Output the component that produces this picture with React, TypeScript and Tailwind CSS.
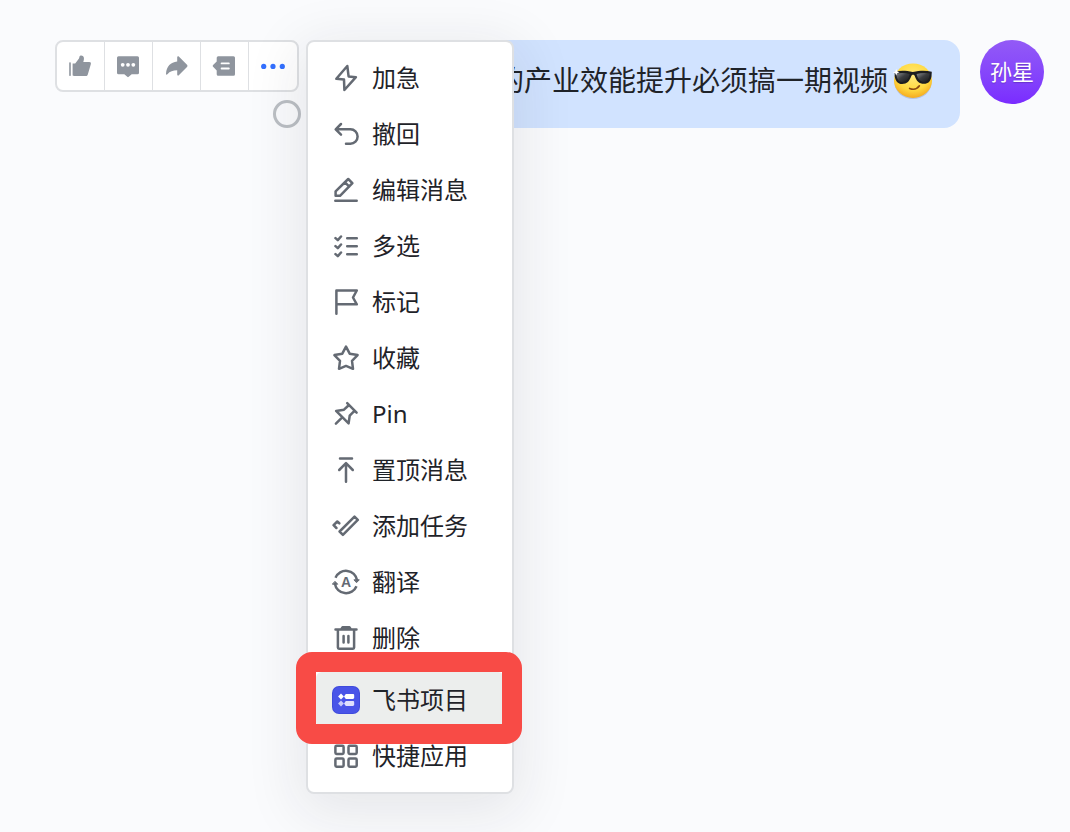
import React from 'react';

interface IconProps {
  children: React.ReactNode;
}

function LineIcon({ children }: IconProps) {
  return (
    <svg
      viewBox="0 0 28 28"
      className="h-7 w-7 shrink-0 text-[#646a73]"
      fill="none"
      stroke="currentColor"
      strokeWidth="2.5"
      strokeLinecap="round"
      strokeLinejoin="round"
      aria-hidden="true"
    >
      {children}
    </svg>
  );
}

function SolidIcon({ children }: IconProps) {
  return (
    <svg viewBox="0 0 28 28" className="h-7 w-7" fill="currentColor" aria-hidden="true">
      {children}
    </svg>
  );
}

function ProjectLogo() {
  return (
    <svg viewBox="0 0 28 28" className="h-7 w-7 shrink-0" aria-hidden="true">
      <rect width="28" height="28" rx="7" fill="#3f4bdc" />
      <rect x="1" y="1" width="26" height="26" rx="6" fill="#4954e8" />
      <path d="M9 7.600l2.900 2.900L9 13.400l-2.900-2.900z" fill="#fff" />
      <path d="M13.800 8h7c.9 0 1.400.5 1.400 1.400v2.200c0 .9-.5 1.400-1.400 1.400h-7L12 10.500z" fill="#fff" />
      <path d="M9 14.600l2.900 2.900L9 20.400l-2.900-2.900z" fill="#c9ccfa" />
      <path d="M13.800 15h7c.9 0 1.400.5 1.400 1.400v2.200c0 .9-.5 1.400-1.400 1.400h-7L12 17.500z" fill="#dfe1fd" />
    </svg>
  );
}

function CoolEmoji() {
  return (
    <svg viewBox="0 0 42 42" className="h-[42px] w-[42px] shrink-0" role="img" aria-label="耍酷">
      <defs>
        <radialGradient id="face" cx="0.5" cy="0.35" r="0.65">
          <stop offset="0" stopColor="#ffea7c" />
          <stop offset="0.65" stopColor="#ffd93f" />
          <stop offset="1" stopColor="#f5ab20" />
        </radialGradient>
        <linearGradient id="lens" x1="0" y1="0" x2="1" y2="1">
          <stop offset="0" stopColor="#8b8d90" />
          <stop offset="0.45" stopColor="#3b3d40" />
          <stop offset="1" stopColor="#17181a" />
        </linearGradient>
      </defs>
      <ellipse cx="21" cy="22.5" rx="18.5" ry="16.5" fill="#9aa4c0" opacity="0.5" />
      <ellipse cx="21" cy="20.7" rx="19" ry="17.2" fill="url(#face)" />
      <path d="M2.6 11.8c6-1.6 11-1.4 18.2.2 7.4-1.6 12.7-1.8 19-.2l-.3 4.4c-.8 5-3.2 7.6-7.5 7.6-5 0-7.6-2.8-9.2-7.8-.7-1.8-2.8-1.8-3.5 0-1.7 5-4.2 8-9.2 8-4.3 0-6.600-2.900-7.400-7.800z" fill="#1d1e20" />
      <path d="M4.3 13.6c4.5-1 9.2-.8 13.4.5-1 4.8-3.6 8-7.7 8-3.6 0-5.3-3.5-5.7-8.5z" fill="url(#lens)" />
      <path d="M24.6 14.1c4.4-1.2 8.9-1.3 13.2-.5-.5 5-2.3 8.300-5.900 8.300-4 0-6.300-3-7.300-7.800z" fill="url(#lens)" />
      <path d="M4.2 9l1 2.300 2.300 1-2.300 1-1 2.300-1-2.300-2.300-1 2.300-1z" fill="#fff" />
      <path d="M17.600 28.400c4 1.600 7.600.6 9.800-2.600" fill="none" stroke="#8a4a12" strokeWidth="1.600" strokeLinecap="round" />
    </svg>
  );
}

const quickActions = [
  {
    label: '表情回复',
    color: 'text-[#8f959e]',
    icon: (
      <SolidIcon>
        <rect x="3.2" y="10.3" width="1.6" height="13.6" rx="0.6" />
        <path d="M6.6 11.4h2.6L13 6.5l.6-2.2c.5-1.4 3.8-1.4 4.3 1.5.2 1.4-.2 2.9-.6 4.200h6c1.400 0 1.900.9 1.500 2.200l-3 10.200c-.4 1-1 1.500-2 1.500H7.800c-.8 0-1.200-.4-1.200-1.200z" />
      </SolidIcon>
    ),
  },
  {
    label: '回复',
    color: 'text-[#8f959e]',
    icon: (
      <SolidIcon>
        <path d="M4.500 4.300h19A1.500 1.500 0 0 1 25 5.800v15a1.500 1.500 0 0 1-1.500 1.500h-5.800l-3 2.500a1 1 0 0 1-1.400 0l-3-2.500H4.500A1.500 1.500 0 0 1 3 20.800v-15a1.500 1.500 0 0 1 1.500-1.500z" />
        <g fill="#fff">
          <circle cx="8.7" cy="12.8" r="1.900" />
          <circle cx="14" cy="12.8" r="1.900" />
          <circle cx="19.3" cy="12.8" r="1.900" />
        </g>
      </SolidIcon>
    ),
  },
  {
    label: '转发',
    color: 'text-[#8f959e]',
    icon: (
      <SolidIcon>
        <path d="M15.200 5.200c0-1 .9-1.400 1.600-.7l8.200 8.300c.6.600.6 1.600 0 2.200l-8.200 8.300c-.7.700-1.600.3-1.600-.7v-4.400c-4.400 0-7.200 1-9.800 4-.7.800-1.500.5-1.400-.5C4.600 14.400 8.600 10.200 15.200 9.500z" />
      </SolidIcon>
    ),
  },
  {
    label: '创建话题',
    color: 'text-[#8f959e]',
    icon: (
      <SolidIcon>
        <path d="M8.200 4.200h15.300A1.500 1.500 0 0 1 25 5.700v16.500a1.500 1.500 0 0 1-1.500 1.500H8.200a1.500 1.500 0 0 1-1.500-1.500v-3.800l-3.600-3.600a1.200 1.200 0 0 1 0-1.800l3.600-3.600V5.700a1.500 1.500 0 0 1 1.500-1.500z" />
        <path d="M11.600 11.400h7.200M11.600 16.500h7.200" stroke="#fff" strokeWidth="1.900" strokeLinecap="round" />
      </SolidIcon>
    ),
  },
  {
    label: '更多',
    color: 'text-[#3370ff]',
    icon: (
      <SolidIcon>
        <circle cx="4.7" cy="14.4" r="2.6" />
        <circle cx="14" cy="14.4" r="2.6" />
        <circle cx="23.3" cy="14.4" r="2.6" />
      </SolidIcon>
    ),
  },
];

const messageActions = [
  {
    label: '加急',
    icon: (
      <LineIcon>
        <path d="M15.300 2 4.300 14.800l7.700.8.400 10.400 11.500-12.800-7.300-.8z" />
      </LineIcon>
    ),
  },
  {
    label: '撤回',
    icon: (
      <LineIcon>
        <path d="M9 4 3.700 9.300 9 14.600M4.200 9.300h14.200a7.200 7.200 0 0 1 0 14.400h-4.400" />
      </LineIcon>
    ),
  },
  {
    label: '编辑消息',
    icon: (
      <LineIcon>
        <path d="M3.600 19.800v-4.500L16.200 3l4.200 4.200L8 19.800zM12.800 6.200l4.400 4.400M3.300 24.700h21.400" />
      </LineIcon>
    ),
  },
  {
    label: '多选',
    icon: (
      <LineIcon>
        <path d="M15.200 6.300h9.600M15.200 14.300h9.600M15.200 22.300h9.600M3.500 6.100l2.300 2 3.200-3.600M3.500 14.100l2.300 2 3.200-3.600M3.500 22.100l2.300 2 3.200-3.600" />
      </LineIcon>
    ),
  },
  {
    label: '标记',
    icon: (
      <LineIcon>
        <path d="M4.400 25.700V2.500h20.400l-3.800 7 3.800 6.800H4.500" />
      </LineIcon>
    ),
  },
  {
    label: '收藏',
    icon: (
      <LineIcon>
        <path d="M14 2.600l3.700 7.100 7.900 1.400-5.600 5.700 1 8L14 21.900l-7 2.900 1-8-5.600-5.700 7.900-1.400z" />
      </LineIcon>
    ),
  },
  {
    label: 'Pin',
    icon: (
      <LineIcon>
        <path d="M15.200 3.200l9.400 9.400M17 5 12 9.700l-7.900 1.200 12.500 12.500L17.700 15.700l5-5M10.200 17.400 3.900 23.700" />
      </LineIcon>
    ),
  },
  {
    label: '置顶消息',
    icon: (
      <LineIcon>
        <path d="M8 2.500h12M14 7.200v18.500M7.200 14 14 7.200l6.800 6.800" />
      </LineIcon>
    ),
  },
  {
    label: '添加任务',
    icon: (
      <LineIcon>
        <path d="M22.500 4.600l3.300 3.300L10.900 22.800l-3.300-3.300zM7.300 11.300 5.300 9.500l-3.700 3.700 2.800 2.800" />
      </LineIcon>
    ),
  },
  {
    label: '翻译',
    icon: (
      <LineIcon>
        <path d="M3.500 9.800a11.300 11.300 0 0 1 21.600 2.500M24.500 18.200A11.300 11.300 0 0 1 2.900 15.700" strokeLinecap="butt" />
        <path d="M22.300 11.800h5l-2.500 2.600zM.7 16.200h5l-2.500-2.600z" fill="currentColor" strokeWidth="1" />
        <text
          x="14"
          y="19"
          textAnchor="middle"
          fontFamily="Liberation Sans, sans-serif"
          fontSize="14"
          fontWeight="700"
          fill="currentColor"
          stroke="none"
        >
          A
        </text>
      </LineIcon>
    ),
  },
  {
    label: '删除',
    icon: (
      <LineIcon>
        <path d="M3.500 5.400h21M9.500 5l1-1.700h7l1 1.700M5.900 5.400v18.200c0 .7.400 1.100 1.100 1.100h14c.7 0 1.100-.4 1.100-1.100V5.400M11.600 12v6.600M16.400 12v6.600" />
      </LineIcon>
    ),
  },
];

const itemClass = 'flex h-14 w-full items-center gap-3 rounded-md px-4 text-left';

function MessageMenu() {
  return (
    <div
      role="menu"
      className="absolute top-0 left-full z-10 ml-[7px] w-52 rounded-lg border-2 border-[#dee0e3] bg-white p-2 text-2xl text-[#1f2329] shadow-[0_12px_56px_8px_rgba(31,35,41,0.09)]"
    >
      {messageActions.map((action) => (
        <button key={action.label} type="button" role="menuitem" className={itemClass}>
          {action.icon}
          <span>{action.label}</span>
        </button>
      ))}

      <div className="relative mt-1.5">
        <button type="button" role="menuitem" className={`${itemClass} bg-[#eceeed]`}>
          <ProjectLogo />
          <span>飞书项目</span>
        </button>
        {/* Highlight frame */}
        <div className="pointer-events-none absolute -top-5 -right-[18px] -bottom-4 -left-5 rounded-2xl border-20 border-[#f84b46]" />
      </div>

      <button type="button" role="menuitem" className={itemClass}>
        <LineIcon>
          <rect x="3.4" y="3.700" width="8.2" height="8.2" rx="1.2" />
          <rect x="16.5" y="3.700" width="8.2" height="8.2" rx="1.2" />
          <rect x="3.4" y="16.5" width="8.2" height="8.2" rx="1.2" />
          <rect x="16.5" y="16.5" width="8.2" height="8.2" rx="1.2" />
        </LineIcon>
        <span>快捷应用</span>
      </button>
    </div>
  );
}

export default function App() {
  return (
    <main className="min-h-screen bg-[#fafbfd] pt-10 pr-[26px] pl-[55px] font-['Noto_Sans','Noto_Sans_CJK_SC',sans-serif]">
      <div className="flex items-start">
        {/* Hover toolbar and read state */}
        <div className="relative flex shrink-0 flex-col items-end gap-2">
          <div className="flex divide-x divide-[#dee0e3] rounded-lg border-2 border-[#dee0e3] bg-white">
            {quickActions.map((action) => (
              <button
                key={action.label}
                type="button"
                aria-label={action.label}
                className={`flex h-12 w-12 items-center justify-center not-last:pr-px ${action.color}`}
              >
                {action.icon}
              </button>
            ))}
          </div>
          <span role="img" aria-label="未读" className="-mr-0.5 h-7 w-7 rounded-full border-3 border-[#bbbfc4]" />
          <MessageMenu />
        </div>

        {/* Message */}
        <div className="ml-3 flex h-[88px] min-w-0 flex-1 items-start justify-end gap-1 rounded-2xl bg-[#d1e3ff] pt-5 pr-[26px] text-[28px] leading-10 text-[#1f2329]">
          <p className="whitespace-nowrap">的产业效能提升必须搞一期视频</p>
          <CoolEmoji />
        </div>

        <div className="ml-5 flex h-16 w-16 shrink-0 items-center justify-center rounded-full bg-linear-to-b from-[#935af6] to-[#7a2bff] pb-0.5 text-[22px] text-white text-shadow-xs">
          孙星
        </div>
      </div>
    </main>
  );
}
